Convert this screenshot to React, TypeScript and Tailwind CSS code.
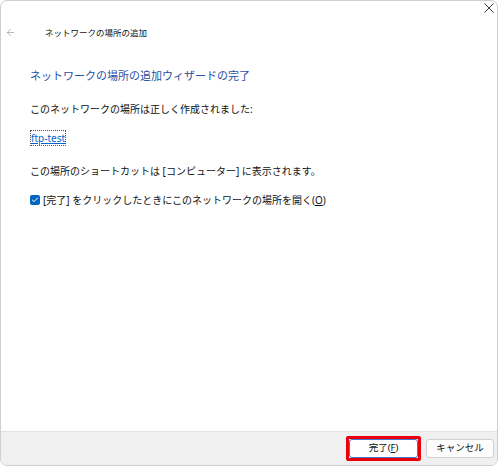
import { ArrowLeft, Check } from 'lucide-react'

const font = { fontFamily: '"Noto Sans", "Noto Sans CJK JP", sans-serif' }

function Checkbox() {
  return (
    <span className="flex h-[10px] w-[10px] items-center justify-center rounded-[2px] bg-[#0067c0]">
      <Check className="h-[8px] w-[8px] text-white" strokeWidth={3} />
    </span>
  )
}

function CloseIcon() {
  return (
    <svg
      className="absolute right-[3px] top-[2px] h-[10px] w-[10px]"
      viewBox="0 0 10 10"
      fill="none"
      stroke="#3a3a3a"
      strokeWidth="1"
    >
      <path d="M0.5 0.5L9.5 9.5M9.5 0.5L0.5 9.5" />
    </svg>
  )
}

export default function App() {
  return (
    <div className="h-[467px] w-[500px] bg-white" style={font}>
      <div className="flex h-[466px] w-[498px] flex-col overflow-hidden rounded-[7px] border border-[#cfcfcf] bg-white text-[#111]">
        <div className="relative flex h-[52px] items-start pt-[26px]">
          <ArrowLeft className="ml-[4px] h-[11px] w-[11px] text-[#9a9a9a]" strokeWidth={1.5} />
          <span className="ml-[29px] -mt-[1px] text-[8.5px] leading-[14px]">ネットワークの場所の追加</span>
          <CloseIcon />
        </div>

        <div className="flex flex-1 flex-col pl-[29px]">
          <h1 className="mt-[15px] text-[11px] leading-[16px] text-[#1f4fa6]">
            ネットワークの場所の追加ウィザードの完了
          </h1>
          <p className="mt-[18px] text-[10px] leading-[14px]">
            このネットワークの場所は正しく作成されました:
          </p>
          <div className="mt-[8px]">
            <span className="border border-dotted border-[#555] text-[10px] leading-[14px] text-[#0066cc] underline">
              ftp-test
            </span>
          </div>
          <p className="mt-[16px] text-[10px] leading-[14px]">
            この場所のショートカットは [コンピューター] に表示されます。
          </p>
          <div className="mt-[15px] flex items-center gap-[3px]">
            <Checkbox />
            <span className="text-[10px] leading-[14px]">
              [完了] をクリックしたときにこのネットワークの場所を開く(<span className="underline">O</span>)
            </span>
          </div>
        </div>

        <div className="flex h-[34px] items-center justify-end gap-[5px] border-t border-[#e2e2e2] bg-[#f0f0f0] pr-[3px]">
          <div className="rounded-[2px] border-[3px] border-[#e8000b] p-0">
            <button className="flex h-[19px] w-[69px] items-center justify-center rounded-[3px] border border-[#3d7bd1] bg-white text-[9.5px] text-[#111]">
              完了(<span className="underline">F</span>)
            </button>
          </div>
          <button className="flex h-[19px] w-[68px] items-center justify-center rounded-[3px] border border-[#d0d0d0] bg-[#fdfdfd] text-[9.5px] text-[#111]">
            キャンセル
          </button>
        </div>
      </div>
    </div>
  )
}
